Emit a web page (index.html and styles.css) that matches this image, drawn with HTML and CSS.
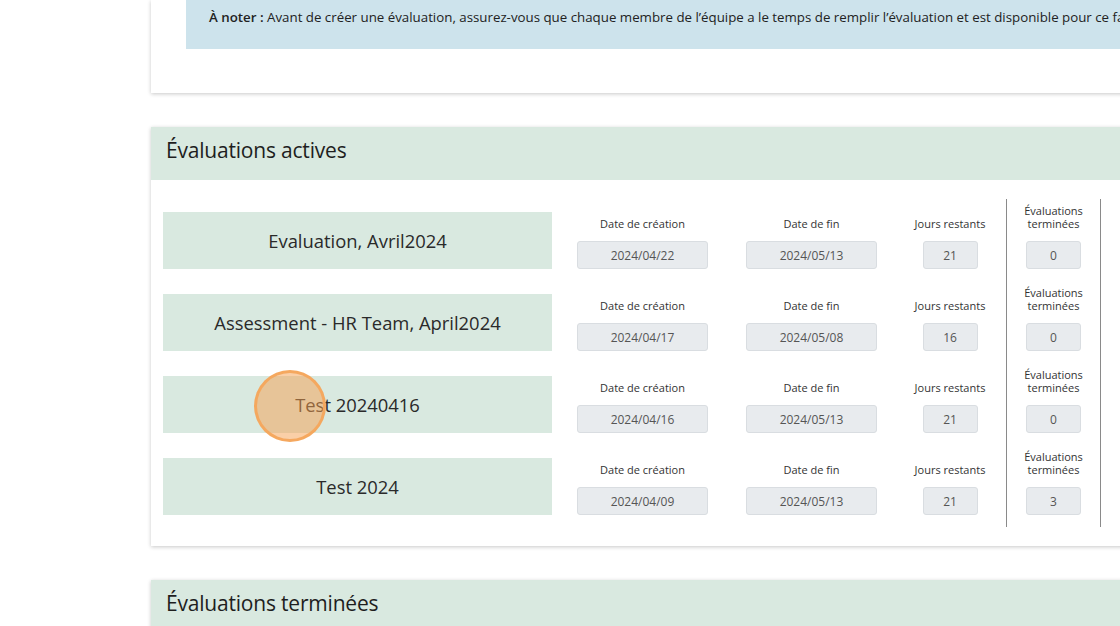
FILE: index.html
```html
<!DOCTYPE html>
<html lang="fr">
<head>
<meta charset="utf-8">
<title>Évaluations</title>
<link rel="stylesheet" href="styles.css">
</head>
<body>
<div class="page">
  <section class="card card-intro">
    <div class="note"><strong>À noter :</strong> Avant de créer une évaluation, assurez-vous que chaque membre de l’équipe a le temps de remplir l’évaluation et est disponible pour ce faire.</div>
  </section>

  <section class="card">
    <header class="card-head"><h2>Évaluations actives</h2></header>
    <div class="card-body">
      <div class="col col-names">
        <div class="cell"><div class="name">Evaluation, Avril2024</div></div>
        <div class="cell"><div class="name">Assessment - HR Team, April2024</div></div>
        <div class="cell"><div class="name">Test 20240416</div></div>
        <div class="cell"><div class="name">Test 2024</div></div>
      </div>
      <div class="col col-date col-create">
        <div class="cell field"><span class="lbl">Date de création</span><span class="box">2024/04/22</span></div>
        <div class="cell field"><span class="lbl">Date de création</span><span class="box">2024/04/17</span></div>
        <div class="cell field"><span class="lbl">Date de création</span><span class="box">2024/04/16</span></div>
        <div class="cell field"><span class="lbl">Date de création</span><span class="box">2024/04/09</span></div>
      </div>
      <div class="col col-date col-end">
        <div class="cell field"><span class="lbl">Date de fin</span><span class="box">2024/05/13</span></div>
        <div class="cell field"><span class="lbl">Date de fin</span><span class="box">2024/05/08</span></div>
        <div class="cell field"><span class="lbl">Date de fin</span><span class="box">2024/05/13</span></div>
        <div class="cell field"><span class="lbl">Date de fin</span><span class="box">2024/05/13</span></div>
      </div>
      <div class="col col-days">
        <div class="cell field"><span class="lbl">Jours restants</span><span class="box small">21</span></div>
        <div class="cell field"><span class="lbl">Jours restants</span><span class="box small">16</span></div>
        <div class="cell field"><span class="lbl">Jours restants</span><span class="box small">21</span></div>
        <div class="cell field"><span class="lbl">Jours restants</span><span class="box small">21</span></div>
      </div>
      <div class="col col-done">
        <div class="cell field"><span class="lbl">Évaluations<br>terminées</span><span class="box small">0</span></div>
        <div class="cell field"><span class="lbl">Évaluations<br>terminées</span><span class="box small">0</span></div>
        <div class="cell field"><span class="lbl">Évaluations<br>terminées</span><span class="box small">0</span></div>
        <div class="cell field"><span class="lbl">Évaluations<br>terminées</span><span class="box small">3</span></div>
      </div>
      <div class="col col-next"></div>
    </div>
  </section>

  <section class="card">
    <header class="card-head"><h2>Évaluations terminées</h2></header>
    <div class="card-body empty"></div>
  </section>
</div>
<div class="cursor-ring"></div>
</body>
</html>
```

FILE: styles.css
```css
html, body {
  margin: 0;
  padding: 0;
  background: #ffffff;
  overflow: hidden;
}
body {
  font-family: "Open Sans", "Noto Sans", "DejaVu Sans", sans-serif;
  color: #222;
  width: 1120px;
  height: 626px;
  position: relative;
}
.page {
  padding-left: 151px;
  width: 1200px;
}
.card {
  background: #fff;
  box-shadow: 0 1px 4px rgba(0, 0, 0, 0.22);
  margin-bottom: 34px;
}
.card-intro {
  padding: 0 0 44px 35px;
}
.note {
  background: #cde3ec;
  padding: 7px 23px 22px;
  font-size: 13.3px;
  line-height: 20px;
  color: #222;
  white-space: nowrap;
}
.note strong {
  font-weight: 600;
}
.card-head {
  background: #d9e9e0;
  height: 53px;
  display: flex;
  align-items: center;
  padding-left: 15px;
}
.card-head h2 {
  margin: 0 0 7px;
  font-size: 21px;
  font-weight: 400;
  color: #1e1e1e;
  letter-spacing: -0.2px;
}
.card-body {
  display: flex;
  padding: 19px 0 19px 12px;
}
.card-body.empty {
  height: 40px;
  padding: 0;
}
.col {
  display: flex;
  flex-direction: column;
}
.cell {
  height: 82px;
  box-sizing: border-box;
  padding: 13px 0 12px;
}
.col-names { width: 389px; }
.name {
  background: #d9e9e0;
  height: 57px;
  display: flex;
  align-items: center;
  justify-content: center;
  font-size: 18.4px;
  color: #2a2a2a;
  padding-bottom: 1px;
  box-sizing: border-box;
}
.field {
  display: flex;
  flex-direction: column;
  align-items: center;
  justify-content: flex-end;
  padding-top: 0;
}
.lbl {
  font-size: 11px;
  line-height: 13px;
  color: #333;
  text-align: center;
  margin-bottom: 11px;
  white-space: nowrap;
}
.box {
  flex-shrink: 0;
  box-sizing: border-box;
  width: 131px;
  height: 28px;
  background: #e8ebee;
  border: 1px solid #d9dde1;
  border-radius: 3px;
  font-size: 12px;
  color: #555;
  display: flex;
  align-items: center;
  justify-content: center;
}
.box.small { width: 55px; }
.col-create { margin-left: 25px; width: 131px; }
.col-end { margin-left: 38px; width: 131px; }
.col-days { margin-left: 33px; width: 80px; }
.col-done {
  margin-left: 16px;
  width: 93px;
  border-left: 1px solid #8a8a8a;
  border-right: 1px solid #8a8a8a;
}
.col-next { width: 60px; }
.cursor-ring {
  position: absolute;
  left: 254px;
  top: 370px;
  width: 66px;
  height: 66px;
  border-radius: 50%;
  background: rgba(246, 160, 80, 0.5);
  border: 3px solid rgba(245, 166, 92, 0.95);
}
```
